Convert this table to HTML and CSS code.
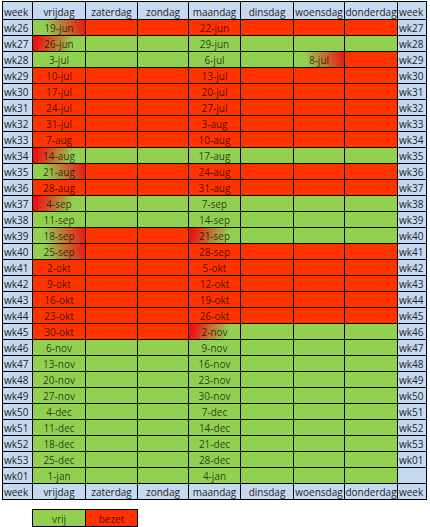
FILE: index.html
```html
<!DOCTYPE html>
<html>

<head>
    <meta charset="utf-8">
    <title>Bezetting</title>
    <link rel="stylesheet" href="styles.css">
</head>

<body>
    <table class="rooster">
        <colgroup>
            <col class="c-wk-l">
            <col class="c-vr">
            <col class="c-za">
            <col class="c-zo">
            <col class="c-ma">
            <col class="c-di">
            <col class="c-wo">
            <col class="c-do">
            <col class="c-wk-r">
        </colgroup>
        <thead>
            <tr class="kop">
                <th class="wk">week</th><th>vrijdag</th><th>zaterdag</th><th>zondag</th><th>maandag</th><th>dinsdag</th><th>woensdag</th><th>donderdag</th><th class="wk">week</th>
            </tr>
        </thead>
        <tbody>
            <tr><td class="wk">wk26</td><td class="gr">19-jun</td><td class="r"></td><td class="r"></td><td class="r">22-jun</td><td class="r"></td><td class="r"></td><td class="r"></td><td class="wk">wk27</td></tr>
            <tr><td class="wk">wk27</td><td class="rg">26-jun</td><td class="g"></td><td class="g"></td><td class="g">29-jun</td><td class="g"></td><td class="g"></td><td class="g"></td><td class="wk">wk28</td></tr>
            <tr><td class="wk">wk28</td><td class="g">3-jul</td><td class="g"></td><td class="g"></td><td class="g">6-jul</td><td class="g"></td><td class="gr">8-jul</td><td class="r"></td><td class="wk">wk29</td></tr>
            <tr><td class="wk">wk29</td><td class="r">10-jul</td><td class="r"></td><td class="r"></td><td class="r">13-jul</td><td class="r"></td><td class="r"></td><td class="r"></td><td class="wk">wk30</td></tr>
            <tr><td class="wk">wk30</td><td class="r">17-jul</td><td class="r"></td><td class="r"></td><td class="r">20-jul</td><td class="r"></td><td class="r"></td><td class="r"></td><td class="wk">wk31</td></tr>
            <tr><td class="wk">wk31</td><td class="r">24-jul</td><td class="r"></td><td class="r"></td><td class="r">27-jul</td><td class="r"></td><td class="r"></td><td class="r"></td><td class="wk">wk32</td></tr>
            <tr><td class="wk">wk32</td><td class="r">31-jul</td><td class="r"></td><td class="r"></td><td class="r">3-aug</td><td class="r"></td><td class="r"></td><td class="r"></td><td class="wk">wk33</td></tr>
            <tr><td class="wk">wk33</td><td class="r">7-aug</td><td class="r"></td><td class="r"></td><td class="r">10-aug</td><td class="r"></td><td class="r"></td><td class="r"></td><td class="wk">wk34</td></tr>
            <tr><td class="wk">wk34</td><td class="rg">14-aug</td><td class="g"></td><td class="g"></td><td class="g">17-aug</td><td class="g"></td><td class="g"></td><td class="g"></td><td class="wk">wk35</td></tr>
            <tr><td class="wk">wk35</td><td class="gr">21-aug</td><td class="r"></td><td class="r"></td><td class="r">24-aug</td><td class="r"></td><td class="r"></td><td class="r"></td><td class="wk">wk36</td></tr>
            <tr><td class="wk">wk36</td><td class="r">28-aug</td><td class="r"></td><td class="r"></td><td class="r">31-aug</td><td class="r"></td><td class="r"></td><td class="r"></td><td class="wk">wk37</td></tr>
            <tr><td class="wk">wk37</td><td class="rg">4-sep</td><td class="g"></td><td class="g"></td><td class="g">7-sep</td><td class="g"></td><td class="g"></td><td class="g"></td><td class="wk">wk38</td></tr>
            <tr><td class="wk">wk38</td><td class="g">11-sep</td><td class="g"></td><td class="g"></td><td class="g">14-sep</td><td class="g"></td><td class="g"></td><td class="g"></td><td class="wk">wk39</td></tr>
            <tr><td class="wk">wk39</td><td class="gr">18-sep</td><td class="r"></td><td class="r"></td><td class="rg">21-sep</td><td class="g"></td><td class="g"></td><td class="g"></td><td class="wk">wk40</td></tr>
            <tr><td class="wk">wk40</td><td class="gr">25-sep</td><td class="r"></td><td class="r"></td><td class="r">28-sep</td><td class="r"></td><td class="r"></td><td class="r"></td><td class="wk">wk41</td></tr>
            <tr><td class="wk">wk41</td><td class="r">2-okt</td><td class="r"></td><td class="r"></td><td class="r">5-okt</td><td class="r"></td><td class="r"></td><td class="r"></td><td class="wk">wk42</td></tr>
            <tr><td class="wk">wk42</td><td class="r">9-okt</td><td class="r"></td><td class="r"></td><td class="r">12-okt</td><td class="r"></td><td class="r"></td><td class="r"></td><td class="wk">wk43</td></tr>
            <tr><td class="wk">wk43</td><td class="r">16-okt</td><td class="r"></td><td class="r"></td><td class="r">19-okt</td><td class="r"></td><td class="r"></td><td class="r"></td><td class="wk">wk44</td></tr>
            <tr><td class="wk">wk44</td><td class="r">23-okt</td><td class="r"></td><td class="r"></td><td class="r">26-okt</td><td class="r"></td><td class="r"></td><td class="r"></td><td class="wk">wk45</td></tr>
            <tr><td class="wk">wk45</td><td class="r">30-okt</td><td class="r"></td><td class="r"></td><td class="rg">2-nov</td><td class="g"></td><td class="g"></td><td class="g"></td><td class="wk">wk46</td></tr>
            <tr><td class="wk">wk46</td><td class="g">6-nov</td><td class="g"></td><td class="g"></td><td class="g">9-nov</td><td class="g"></td><td class="g"></td><td class="g"></td><td class="wk">wk47</td></tr>
            <tr><td class="wk">wk47</td><td class="g">13-nov</td><td class="g"></td><td class="g"></td><td class="g">16-nov</td><td class="g"></td><td class="g"></td><td class="g"></td><td class="wk">wk48</td></tr>
            <tr><td class="wk">wk48</td><td class="g">20-nov</td><td class="g"></td><td class="g"></td><td class="g">23-nov</td><td class="g"></td><td class="g"></td><td class="g"></td><td class="wk">wk49</td></tr>
            <tr><td class="wk">wk49</td><td class="g">27-nov</td><td class="g"></td><td class="g"></td><td class="g">30-nov</td><td class="g"></td><td class="g"></td><td class="g"></td><td class="wk">wk50</td></tr>
            <tr><td class="wk">wk50</td><td class="g">4-dec</td><td class="g"></td><td class="g"></td><td class="g">7-dec</td><td class="g"></td><td class="g"></td><td class="g"></td><td class="wk">wk51</td></tr>
            <tr><td class="wk">wk51</td><td class="g">11-dec</td><td class="g"></td><td class="g"></td><td class="g">14-dec</td><td class="g"></td><td class="g"></td><td class="g"></td><td class="wk">wk52</td></tr>
            <tr><td class="wk">wk52</td><td class="g">18-dec</td><td class="g"></td><td class="g"></td><td class="g">21-dec</td><td class="g"></td><td class="g"></td><td class="g"></td><td class="wk">wk53</td></tr>
            <tr><td class="wk">wk53</td><td class="g">25-dec</td><td class="g"></td><td class="g"></td><td class="g">28-dec</td><td class="g"></td><td class="g"></td><td class="g"></td><td class="wk">wk01</td></tr>
            <tr><td class="wk">wk01</td><td class="g">1-jan</td><td class="g"></td><td class="g"></td><td class="g">4-jan</td><td class="g"></td><td class="g"></td><td class="g"></td><td class="wk"></td></tr>
        </tbody>
        <tfoot>
            <tr class="voet">
                <th class="wk">week</th><th>vrijdag</th><th>zaterdag</th><th>zondag</th><th>maandag</th><th>dinsdag</th><th>woensdag</th><th>donderdag</th><th class="wk">week</th>
            </tr>
        </tfoot>
    </table>

    <table class="legenda">
        <tr>
            <td class="g">vrij</td><td class="r">bezet</td>
        </tr>
    </table>
</body>

</html>
```

FILE: styles.css
```css
body {
    margin: 0;
    padding: 1px 0 0 2px;
    font-family: "Open Sans", "Noto Sans", Arial, sans-serif;
    font-size: 10px;
    background: #fff;
}

table {
    border-collapse: separate;
    border-spacing: 1px;
    background-color: #000;
}

.rooster {
    table-layout: fixed;
    width: 425px;
}

.c-wk-l { width: 29px; }
.c-vr { width: 52px; }
.c-za { width: 51px; }
.c-zo { width: 50px; }
.c-ma { width: 51px; }
.c-di { width: 52px; }
.c-wo { width: 50px; }
.c-do { width: 52px; }
.c-wk-r { width: 28px; }

td, th {
    padding: 0;
    height: 15px;
    line-height: 13px;
    vertical-align: bottom;
    text-align: center;
    white-space: nowrap;
    overflow: hidden;
    font-weight: normal;
    color: rgba(0, 0, 0, 0.72);
}

.kop th {
    height: 17px;
}

th {
    background-color: #c5d9f1;
    color: #1e1e1e;
}

.wk {
    background-color: #c5d9f1;
    color: #1e1e1e;
    text-align: left;
    padding-left: 1px;
}

/* vrij */
.g {
    background-color: #92d050;
}

/* bezet */
.r {
    background-color: #ff3300;
}

/* aankomst: vrij -> bezet */
.gr {
    background-image: linear-gradient(76deg, #92d050 25%, #f01010 100%);
}

/* vertrek: bezet -> vrij */
.rg {
    background-image: linear-gradient(104deg, #f01010 8%, #92d050 75%);
}

.legenda {
    margin: 9px 0 0 30px;
}

.legenda td {
    height: 16px;
}

.legenda .g {
    width: 52px;
}

.legenda .r {
    width: 51px;
}
```
